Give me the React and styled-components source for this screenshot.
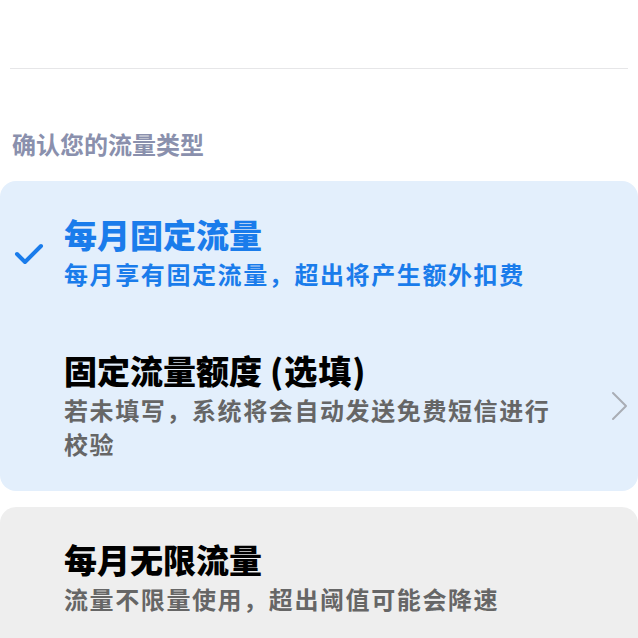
import React from "react";
import styled, { createGlobalStyle } from "styled-components";

const Global = createGlobalStyle`
  html, body { margin: 0; padding: 0; background: #ffffff; }
  body { font-family: "Noto Sans CJK SC", "Noto Sans", sans-serif; overflow: hidden; }
`;

const Page = styled.div`
  width: 638px;
  height: 638px;
  overflow: hidden;
  display: flex;
  flex-direction: column;
  & > * { flex-shrink: 0; }
`;

const TopBar = styled.div`
  height: 68px;
  margin: 0 10px;
  border-bottom: 1px solid #e6e6e8;
`;

const SectionTitle = styled.div`
  margin: 58px 0 0 12px;
  font-size: 24px;
  line-height: 34px;
  font-weight: 700;
  color: #8a90ad;
`;

const Card = styled.div`
  margin-top: ${(p) => p.$top}px;
  background: ${(p) => (p.$active ? "#e3effc" : "#eeeeee")};
  border-radius: 16px;
  padding: ${(p) => p.$pad};
  display: flex;
  flex-direction: column;
`;

const Row = styled.div`
  display: grid;
  grid-template-columns: 64px 1fr 74px;
  align-items: center;
  margin-top: ${(p) => p.$top || 0}px;
`;

const CheckCell = styled.div`
  display: flex;
  justify-content: flex-start;
  padding-left: 14px;
  padding-top: 2px;
`;

const Texts = styled.div`
  display: flex;
  flex-direction: column;
`;

const Title = styled.div`
  font-size: 33px;
  line-height: 40px;
  font-weight: 900;
  color: ${(p) => (p.$blue ? "#1a7ceb" : "#000000")};
`;

const Paren = styled.span`
  margin-left: 8px;
  letter-spacing: 1px;
`;

const Desc = styled.div`
  margin-top: ${(p) => p.$gap}px;
  font-size: 24px;
  letter-spacing: 1.6px;
  line-height: 34px;
  font-weight: 700;
  color: ${(p) => (p.$blue ? "#1a7ceb" : "#666666")};
`;

const ChevCell = styled.div`
  display: flex;
  justify-content: flex-end;
  padding-right: 9px;
`;

const Check = () => (
  <svg width="30" height="24" viewBox="0 0 30 24">
    <path d="M3 12 L11 20 L27 4" fill="none" stroke="#1a7ceb" strokeWidth="4" strokeLinecap="round" strokeLinejoin="round" />
  </svg>
);

const Chevron = () => (
  <svg width="18" height="30" viewBox="0 0 18 30">
    <path d="M2 2 L15 15 L2 28" fill="none" stroke="#a9adb5" strokeWidth="2" strokeLinecap="round" strokeLinejoin="round" />
  </svg>
);

export default function App() {
  return (
    <Page>
      <Global />
      <TopBar />
      <SectionTitle>确认您的流量类型</SectionTitle>
      <Card $active $top={20} $pad="33px 0 30px">
        <Row>
          <CheckCell>
            <Check />
          </CheckCell>
          <Texts>
            <Title $blue>每月固定流量</Title>
            <Desc $blue $gap={3}>每月享有固定流量，超出将产生额外扣费</Desc>
          </Texts>
          <div />
        </Row>
        <Row $top={59}>
          <div />
          <Texts>
            <Title>
              固定流量额度<Paren>(选填)</Paren>
            </Title>
            <Desc $gap={3}>若未填写，系统将会自动发送免费短信进行校验</Desc>
          </Texts>
          <ChevCell>
            <Chevron />
          </ChevCell>
        </Row>
      </Card>
      <Card $top={16} $pad="32px 0 40px">
        <Row>
          <div />
          <Texts>
            <Title>每月无限流量</Title>
            <Desc $gap={3}>流量不限量使用，超出阈值可能会降速</Desc>
          </Texts>
          <div />
        </Row>
      </Card>
    </Page>
  );
}
